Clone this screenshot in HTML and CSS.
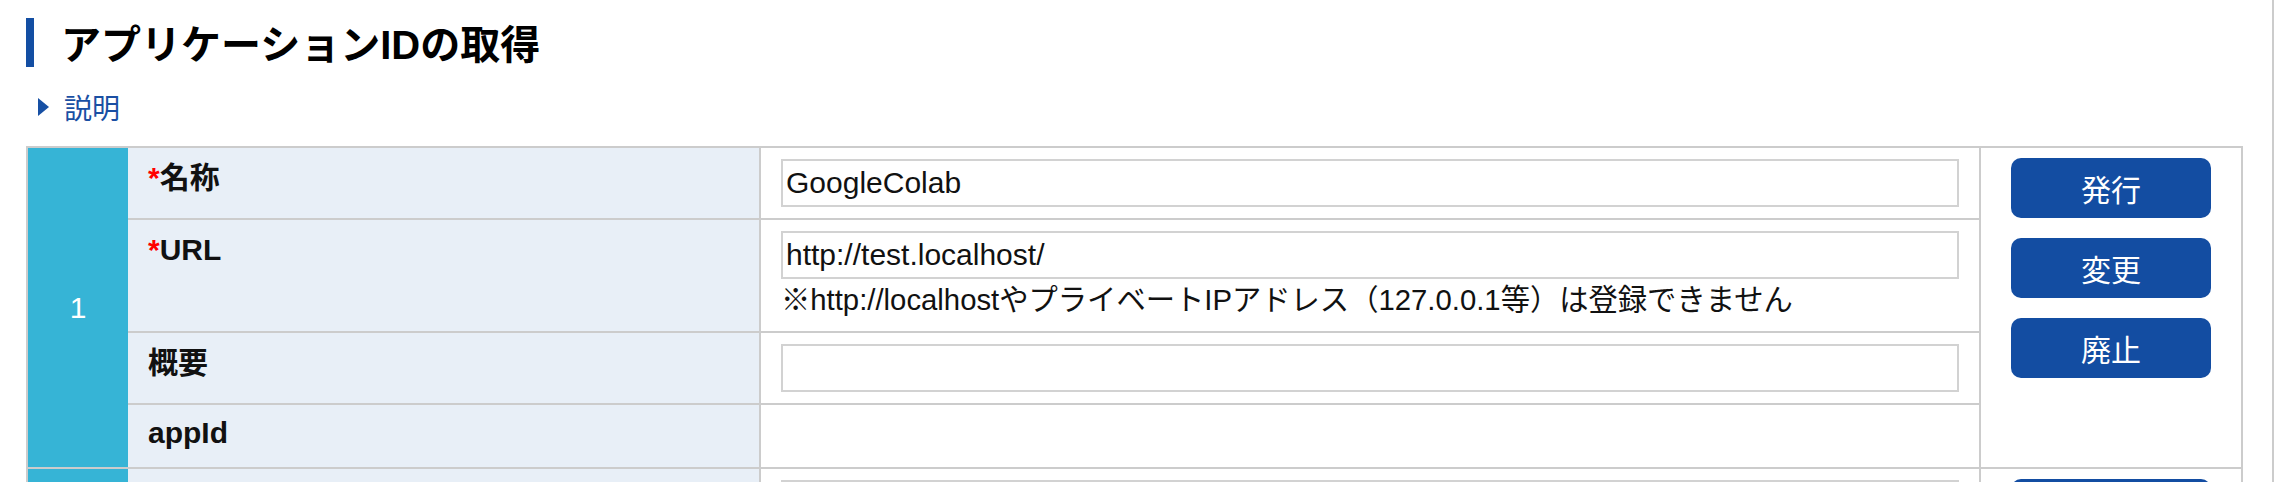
FILE: index.html
```html
<!DOCTYPE html>
<html lang="ja">
<head>
<meta charset="utf-8">
<title>アプリケーションIDの取得</title>
<link rel="stylesheet" href="styles.css">
</head>
<body>
<div class="page">
  <h1 class="title">アプリケーションIDの取得</h1>
  <a class="toggle" href="#"><span class="tri"></span>説明</a>
  <div class="apps">
    <div class="group">
      <div class="num">1</div>
      <div class="label"><span class="req">*</span>名称</div>
      <div class="value"><input class="field" type="text" value="GoogleColab"></div>
      <div class="label"><span class="req">*</span>URL</div>
      <div class="value"><input class="field" type="text" value="http://test.localhost/"><div class="note">※http://localhostやプライベートIPアドレス（127.0.0.1等）は登録できません</div></div>
      <div class="label">概要</div>
      <div class="value"><input class="field" type="text" value=""></div>
      <div class="label last">appId</div>
      <div class="value last"></div>
      <div class="actions">
        <button class="btn" type="button">発行</button>
        <button class="btn" type="button">変更</button>
        <button class="btn" type="button">廃止</button>
      </div>
    </div>
    <div class="group">
      <div class="num">2</div>
      <div class="label"><span class="req">*</span>名称</div>
      <div class="value"><input class="field" type="text" value=""></div>
      <div class="label"><span class="req">*</span>URL</div>
      <div class="value"><input class="field" type="text" value=""><div class="note">※http://localhostやプライベートIPアドレス（127.0.0.1等）は登録できません</div></div>
      <div class="label">概要</div>
      <div class="value"><input class="field" type="text" value=""></div>
      <div class="label last">appId</div>
      <div class="value last"></div>
      <div class="actions">
        <button class="btn" type="button">発行</button>
        <button class="btn" type="button">変更</button>
        <button class="btn" type="button">廃止</button>
      </div>
    </div>
  </div>
</div>
</body>
</html>
```

FILE: styles.css
```css
html, body {
  margin: 0;
  padding: 0;
  background: #fff;
  overflow: hidden;
}

body {
  font-family: "Liberation Sans", "Noto Sans CJK JP", sans-serif;
  color: #111;
}

.page {
  box-sizing: border-box;
  height: 100vh;
  overflow: hidden;
  margin-right: 2px;
  border-right: 2px solid #cccccc;
  padding: 18px 29px 0 26px;
}

.title {
  margin: 0;
  box-sizing: border-box;
  height: 49px;
  border-left: 8px solid #134ea3;
  padding: 6px 0 0 27px;
  font-size: 40px;
  line-height: 43px;
  font-weight: bold;
  color: #000;
}

.toggle {
  display: block;
  margin-top: 23px;
  font-size: 28px;
  line-height: 40px;
  color: #1a4fa3;
  text-decoration: none;
  padding-left: 12px;
}

.tri {
  display: inline-block;
  width: 0;
  height: 0;
  border-left: 11px solid #1750a4;
  border-top: 9px solid transparent;
  border-bottom: 9px solid transparent;
  margin: 0 15px 3px 0;
  vertical-align: baseline;
}

.apps {
  margin-top: 16px;
  border-top: 2px solid #cccccc;
  border-left: 2px solid #cccccc;
  border-right: 2px solid #cccccc;
}

.group {
  display: grid;
  grid-template-columns: 100px 633px 1fr 260px;
  border-bottom: 2px solid #cccccc;
}

.num {
  grid-column: 1;
  grid-row: 1 / span 4;
  background: #36b4d6;
  color: #fff;
  font-size: 30px;
  display: flex;
  align-items: center;
  justify-content: center;
}

.label {
  grid-column: 2;
  background: #e8eff7;
  border-right: 2px solid #cccccc;
  border-bottom: 2px solid #cccccc;
  padding: 10px 20px 0;
  font-size: 30px;
  line-height: 40px;
  font-weight: bold;
  color: #111;
}

.req {
  color: #ff0000;
}

.value {
  grid-column: 3;
  border-right: 2px solid #cccccc;
  border-bottom: 2px solid #cccccc;
  padding: 11px 20px;
  font-size: 30px;
  line-height: 41px;
}

.label.last,
.value.last {
  border-bottom: none;
}

.label.last {
  padding-top: 8px;
  padding-bottom: 14px;
}

.value.last {
  padding: 0;
}

.field {
  display: block;
  box-sizing: border-box;
  width: 100%;
  height: 48px;
  margin: 0;
  border: 2px solid #d2d2d2;
  border-radius: 0;
  padding: 0 3px;
  font: inherit;
  font-size: 30px;
  color: #111;
  background: #fff;
  outline: none;
}

.note {
  color: #111;
  font-size: 29.3px;
}

.actions {
  grid-column: 4;
  grid-row: 1 / span 4;
  display: flex;
  flex-direction: column;
  align-items: center;
  gap: 20px;
  padding-top: 10px;
}

.btn {
  width: 200px;
  height: 60px;
  border: none;
  border-radius: 10px;
  background: #134da2;
  color: #fff;
  font-family: "Liberation Sans", "Noto Sans CJK JP", sans-serif;
  font-size: 30px;
  padding: 0;
  cursor: pointer;
}
```
